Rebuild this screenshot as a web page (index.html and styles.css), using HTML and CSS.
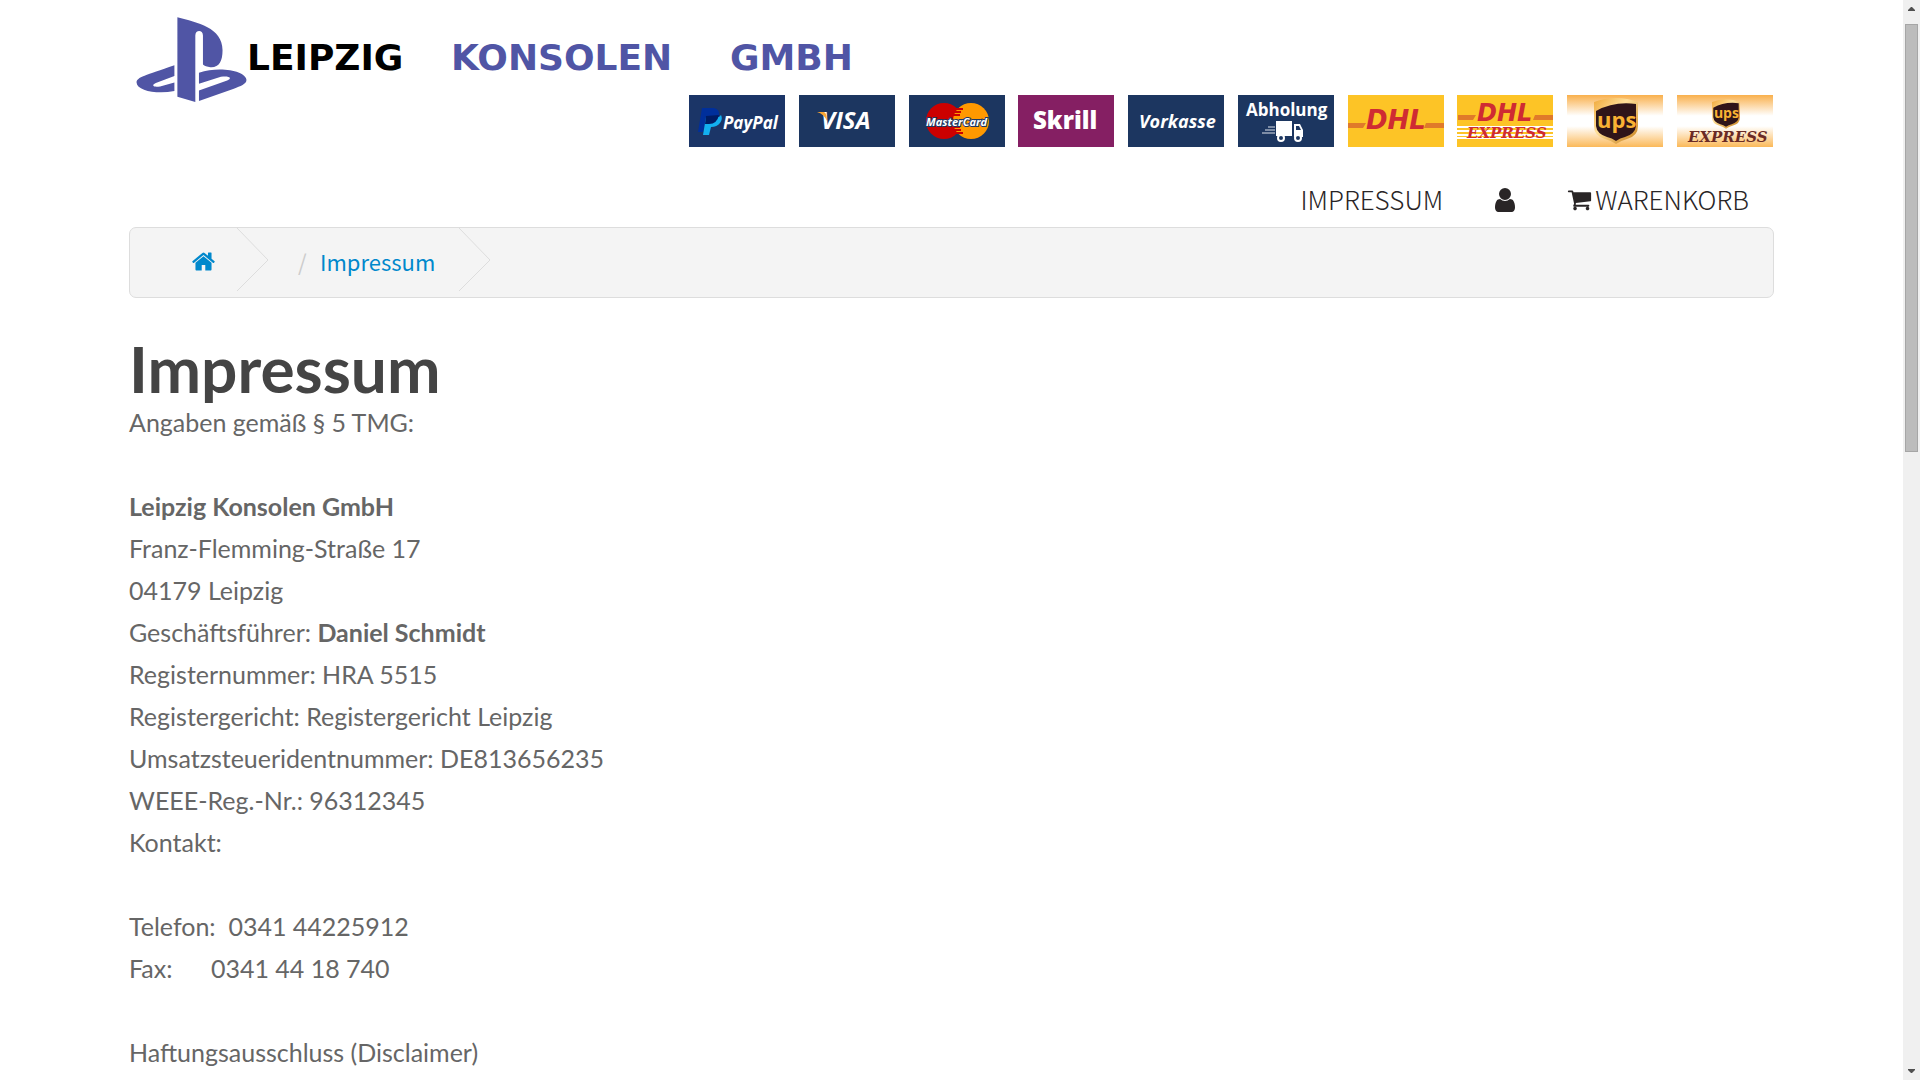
FILE: index.html
```html
<!DOCTYPE html>
<html lang="de">
<head>
<meta charset="utf-8">
<title>Impressum</title>
<link rel="stylesheet" href="styles.css">
</head>
<body>
<div class="page">
  <header>
    <a class="logo" href="#" aria-label="Leipzig Konsolen GmbH">
      <svg class="logo-mark" viewBox="48 50 333 256" aria-hidden="true">
        <path d="M172 51C232 67 308 82 308 150C308 184 297 203 271 201C262 200 253 197 249 193V106C249 88 226 88 226 106V306L172 290Z"/>
        <path d="M163 195V228L107 249C92 256 100 263 120 259L163 247V273C110 283 50 272 49 247C50 230 75 226 163 195Z"/>
        <path d="M237 218C300 196 380 213 380 240C380 252 362 259 342 266L237 303V271L322 241C338 235 330 226 303 230L237 251Z"/>
      </svg>
      <span class="logo-city">LEIPZIG</span>
      <span class="logo-name">KONSOLEN</span>
      <span class="logo-name">GMBH</span>
    </a>

    <div class="badges">
      <svg class="badge" viewBox="0 0 96 52">
        <rect width="96" height="52" fill="#1b3567"/>
        <path d="M13 13H25Q31 14 30 21Q28 29 20 29H16L14 37H9Z" fill="#002f9b"/>
        <path d="M17 22H30L32 20Q34 24 31 28Q28 32 22 32L20 40H14Z" fill="#13b0f0"/>
        <path d="M17 21L30 20Q28 29 20 29H16Z" fill="#001c64"/>
        <text x="34" y="34" class="condensed" font-size="17">PayPal</text>
      </svg>
      <svg class="badge" viewBox="0 0 96 52">
        <rect width="96" height="52" fill="#1c3660"/>
        <text x="22" y="34" class="sans" font-style="italic" font-size="24">VISA</text>
        <path d="M18 17H25Q28 18 28 26Q25 19 18 17Z" fill="#f9a533"/>
      </svg>
      <svg class="badge" viewBox="0 0 96 52">
        <rect width="96" height="52" fill="#1c3660"/>
        <circle cx="35" cy="26" r="18" fill="#c00"/>
        <circle cx="62" cy="26" r="18" fill="#f90"/>
        <path d="M45 14H54M44 17H52M44 20H51M44 32H51M44 35H52M45 38H54" stroke="#c00" stroke-width="2"/>
        <text x="17" y="31" class="condensed" font-size="11" stroke="#1c3660" stroke-width="2" paint-order="stroke">MasterCard</text>
      </svg>
      <svg class="badge" viewBox="0 0 96 52">
        <rect width="96" height="52" fill="#851f63"/>
        <text x="15" y="34" class="sans heavy" font-size="24">Skrill</text>
      </svg>
      <svg class="badge" viewBox="0 0 96 52">
        <rect width="96" height="52" fill="#1c3660"/>
        <text x="11" y="33" class="condensed" font-size="18">Vorkasse</text>
      </svg>
      <svg class="badge" viewBox="0 0 96 52">
        <rect width="96" height="52" fill="#1c3660"/>
        <text x="8" y="21" class="sans" font-size="17">Abholung</text>
        <path d="M38 26H54V41H38ZM56 29H62L65 35V42H56Z" fill="#fff"/>
        <path d="M58 31H61L63 35H58Z" fill="#1c3660"/>
        <path d="M30 32H37M27 35H37M24 38H37" stroke="#dde2ea" stroke-width="1"/>
        <g fill="#1c3660" stroke="#fff" stroke-width="2"><circle cx="43" cy="43" r="3"/><circle cx="60" cy="43" r="3"/></g>
      </svg>
      <svg class="badge" viewBox="0 0 96 52">
        <rect width="96" height="52" fill="#fdc426"/>
        <path d="M0 28H18L15 33H0ZM78 28H96V33H76Z" fill="#e07a2a"/>
        <text x="18" y="34" class="dhl" font-size="26">DHL</text>
      </svg>
      <svg class="badge" viewBox="0 0 96 52">
        <rect width="96" height="52" fill="#fdc426"/>
        <path d="M1 20H19L16 25H1ZM78 20H96V25H76Z" fill="#e07a2a"/>
        <path d="M0 32H96M0 36H96M0 40H96M0 43H96" stroke="#fff" stroke-width="2"/>
        <text x="20" y="26" class="dhl" font-size="24">DHL</text>
        <text x="10" y="43" class="serif" fill="#cf2b33" font-size="15">EXPRESS</text>
      </svg>
      <svg class="badge" viewBox="0 0 96 52">
        <defs>
          <linearGradient id="sheen" x2="0" y2="1"><stop offset="0" stop-color="#f9b04c"/><stop offset=".4" stop-color="#fff"/><stop offset=".6" stop-color="#fff"/><stop offset="1" stop-color="#fbb959"/></linearGradient>
          <linearGradient id="gold" x2="1" y2="1"><stop offset="0" stop-color="#f0a93a"/><stop offset=".4" stop-color="#ffe09a"/><stop offset="1" stop-color="#c67c14"/></linearGradient>
          <symbol id="shield" viewBox="0 0 44 46">
            <path d="M0 4Q22-4 44 4V28Q44 38 33 41Q26 43 22 46Q18 43 11 41Q0 38 0 28Z" fill="url(#gold)"/>
            <path d="M2 13Q20 3 42 6V28Q41 36 31 39Q26 40 22 43Q18 40 13 39Q3 36 2 28Z" fill="#2f1519"/>
            <text x="3" y="30" class="ups" font-size="22">ups</text>
          </symbol>
        </defs>
        <rect width="96" height="52" fill="url(#sheen)"/>
        <use href="#shield" x="27" y="3" width="44" height="46"/>
      </svg>
      <svg class="badge" viewBox="0 0 96 52">
        <rect width="96" height="52" fill="url(#sheen)"/>
        <use href="#shield" x="35" y="4" width="28" height="30"/>
        <text x="11" y="47" class="serif" fill="#6b2a25" font-size="15">EXPRESS</text>
      </svg>
    </div>

    <nav>
      <a href="#">IMPRESSUM</a>
      <a href="#" class="account" aria-label="Konto"><svg class="icon-user" viewBox="256 0 1280 1664"><path d="M1536 1399q0 109-62.500 187t-150.500 78h-854q-88 0-150.500-78t-62.500-187q0-85 8.500-160.500t31.500-152 58.500-131 94-89 134.500-34.500q131 128 313 128t313-128q76 0 134.500 34.500t94 89 58.500 131 31.500 152 8.500 160.500zm-256-887q0 159-112.500 271.500t-271.500 112.500-271.500-112.500-112.500-271.500 112.500-271.500 271.500-112.500 271.500 112.500 112.500 271.500z"/></svg></a>
      <a href="#" class="cart"><svg class="icon" viewBox="0 0 1792 1792"><path d="M704 1536q0 52-38 90t-90 38-90-38-38-90 38-90 90-38 90 38 38 90zm896 0q0 52-38 90t-90 38-90-38-38-90 38-90 90-38 90 38 38 90zm128-1088v512q0 24-16.500 42.500t-40.500 21.500l-1044 122q13 60 13 70 0 16-24 64h920q26 0 45 19t19 45-19 45-45 19h-1024q-26 0-45-19t-19-45q0-11 8-31.500t16-36 21.500-40 15.500-29.500l-177-823h-204q-26 0-45-19t-19-45 19-45 45-19h256q16 0 28.500 6.500t19.500 15.500 13 24.500 8 26 5.500 29.500 4.500 26h1201q26 0 45 19t19 45z"/></svg>WARENKORB</a>
    </nav>
  </header>

  <ul class="breadcrumb">
    <li class="home"><a href="#" aria-label="Startseite"><svg class="icon" viewBox="0 0 1792 1792"><path d="M1472 992v480q0 26-19 45t-45 19h-384v-384h-256v384h-384q-26 0-45-19t-19-45v-480q0-1 .5-3t.5-3l575-474 575 474q1 2 1 6zm223-69l-62 74q-8 9-21 11h-3q-13 0-21-7l-692-577-692 577q-12 8-24 7-13-2-21-11l-62-74q-8-10-7-23.500t11-21.500l719-599q32-26 76-26t76 26l244 204v-195q0-14 9-23t23-9h192q14 0 23 9t9 23v408l219 182q10 8 11 21.500t-7 23.500z"/></svg></a></li>
    <li class="chevron" aria-hidden="true"><svg viewBox="0 0 32 64"><path d="M0 0L31 32L0 63"/></svg></li>
    <li class="current"><span class="slash">/</span><a href="#">Impressum</a></li>
    <li class="chevron" aria-hidden="true"><svg viewBox="0 0 32 64"><path d="M0 0L31 32L0 63"/></svg></li>
  </ul>

  <main>
    <h1>Impressum</h1>
    <p>Angaben gemäß § 5 TMG:</p>
    <p><strong>Leipzig Konsolen GmbH</strong><br>
      Franz-Flemming-Straße 17<br>
      04179 Leipzig<br>
      Geschäftsführer: <strong>Daniel Schmidt</strong><br>
      Registernummer: HRA 5515<br>
      Registergericht: Registergericht Leipzig<br>
      Umsatzsteueridentnummer: DE813656235<br>
      WEEE-Reg.-Nr.: 96312345<br>
      Kontakt:</p>
    <p>Telefon:&nbsp; 0341 44225912<br>
      Fax:&nbsp; &nbsp; &nbsp; 0341 44 18 740</p>
    <p>Haftungsausschluss (Disclaimer)</p>
  </main>
</div>

<div class="scrollbar" aria-hidden="true">
  <svg class="arrow" viewBox="0 0 7 4"><path d="M0 4V3L3 0H4L7 3V4Z"/></svg>
  <div class="track"><div class="thumb"></div></div>
  <svg class="arrow" viewBox="0 0 7 4"><path d="M0 0V1L3 4H4L7 1V0Z"/></svg>
</div>
</body>
</html>
```
FILE: styles.css
```css
* { box-sizing: border-box; }

html { overflow: hidden; }

body {
  margin: 0;
  padding-right: 17px;
  background: #fff;
  color: #666;
  font-family: Lato, sans-serif;
  font-size: 25px;
  line-height: 42px;
}

a { color: #08c; text-decoration: none; }

.page { padding: 17px 129px 0; }

/* Header */
header { display: flex; flex-direction: column; }

.logo {
  display: flex;
  align-items: center;
  align-self: flex-start;
  height: 85px;
  padding-left: 7px;
  font-family: "DejaVu Sans", sans-serif;
  font-size: 36px;
  font-weight: bold;
  line-height: 40px;
}
.logo-mark { width: 111px; height: 85px; fill: #5055a5; }
.logo span { padding-bottom: 4px; }
.logo-city { width: 204px; color: #000; }
.logo-name { width: 279px; color: #5055a5; }
.logo-name:last-child { width: auto; }

.badges {
  display: flex;
  justify-content: space-between;
  align-self: flex-end;
  width: 1085px;
  max-width: 100%;
  margin-top: -7px;
  padding-right: 1px;
}
.badge { width: 96px; height: 52px; }
.badge text { font-weight: bold; }
.condensed { fill: #fff; font-family: "Open Sans", sans-serif; font-style: italic; }
.sans { fill: #fff; font-family: "Open Sans", sans-serif; }
.badge .heavy { font-weight: 800; }
.dhl { fill: #cf2b33; font-family: "DejaVu Sans", sans-serif; font-style: italic; }
.serif { font-family: "DejaVu Serif", serif; font-style: italic; }
.ups { fill: #f9b233; font-family: "Open Sans", sans-serif; font-weight: bold; }

nav {
  display: flex;
  justify-content: flex-end;
  align-items: center;
  height: 80px;
  padding: 24px 25px 0 0;
  font-family: "Noto Sans CJK JP", sans-serif;
  font-size: 26px;
  font-weight: 300;
  line-height: 40px;
}
nav a { display: flex; align-items: center; color: #292526; fill: #292526; }
.account { margin: 0 52px; }
.cart { gap: 3px; }
.icon { width: 25px; height: 25px; }
.icon-user { width: 20px; height: 26px; }

/* Breadcrumb */
.breadcrumb {
  display: flex;
  align-items: center;
  height: 71px;
  margin: 0 0 39px;
  padding: 0 0 3px 61px;
  border: 1px solid #ddd;
  border-radius: 7px;
  background: #f4f4f4;
  list-style: none;
  font-family: "Noto Sans CJK JP", sans-serif;
  font-size: 22px;
  line-height: 40px;
}
.home { width: 46px; }
.home svg { display: block; fill: #08c; }
.chevron { align-self: flex-start; height: 64px; }
.chevron svg { display: block; width: 32px; height: 64px; fill: none; stroke: #ddd; }
.current { display: flex; padding: 0 24px 0 29px; }
.slash { width: 22px; color: #ccc; }

/* Content */
h1 {
  margin: 0;
  color: #444;
  font-size: 64px;
  font-weight: bold;
  line-height: 64px;
}
p { margin: 0 0 42px; }

/* Scrollbar */
.scrollbar {
  position: fixed;
  top: 0;
  right: 0;
  bottom: 0;
  width: 17px;
  display: flex;
  flex-direction: column;
  align-items: center;
  padding: 7px 2px;
  background: #f0f0f0;
}
.arrow { width: 7px; height: 4px; fill: #505050; }
.track { flex: 1; width: 13px; padding: 13px 0; }
.thumb { height: 41.5%; border: 1px solid #a6a6a6; background: #bcbcbc; }
```
